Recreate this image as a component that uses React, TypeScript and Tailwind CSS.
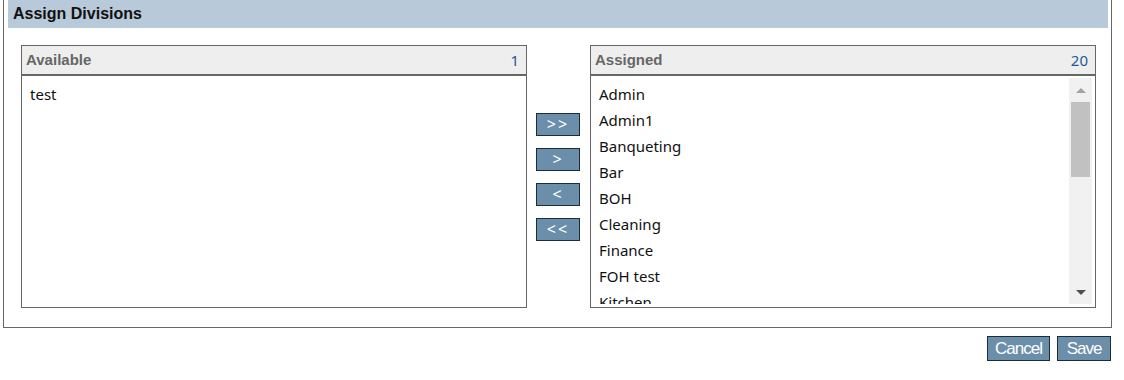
import React from 'react';

type ListPanelProps = {
  title: string;
  count: number;
  items: string[];
  scroll?: boolean;
};

const assigned = [
  'Admin',
  'Admin1',
  'Banqueting',
  'Bar',
  'BOH',
  'Cleaning',
  'Finance',
  'FOH test',
  'Kitchen',
  'Maintenance',
];

function ListPanel({ title, count, items, scroll }: ListPanelProps) {
  return (
    <div className="flex h-[263px] w-[506px] flex-col border border-[#666666] bg-white">
      <div className="flex h-[30px] items-center justify-between border-b-2 border-[#666666] bg-[#eeeeee] pl-[4px] pr-[7px]">
        <span className="font-['Liberation_Sans',Arial,sans-serif] text-[15px] font-bold text-[#666666]">
          {title}
        </span>
        <span className="font-['Noto_Sans',sans-serif] text-[15px] text-[#1f5a99]">{count}</span>
      </div>
      <div className="flex min-h-0 flex-1 pt-[2px] pr-[3px] pb-[3px]">
        <div className="min-h-0 flex-1 overflow-hidden pt-[3px] pl-[8px]">
          {items.map((item) => (
            <div
              key={item}
              className="h-[26px] font-['Noto_Sans',sans-serif] text-[15px] leading-[26px] text-[#111111]"
            >
              {item}
            </div>
          ))}
        </div>
        {scroll && (
          <div className="flex w-[23px] flex-col bg-[#f1f1f1]">
            <div className="flex h-[24px] items-center justify-center">
              <div className="h-0 w-0 border-x-[5px] border-b-[5px] border-x-transparent border-b-[#a3a3a3]" />
            </div>
            <div className="mx-[2px] h-[75px] bg-[#c1c1c1]" />
            <div className="flex-1" />
            <div className="flex h-[24px] items-center justify-center">
              <div className="h-0 w-0 border-x-[5px] border-t-[5px] border-x-transparent border-t-[#505050]" />
            </div>
          </div>
        )}
      </div>
    </div>
  );
}

function MoveButton({ label }: { label: string }) {
  return (
    <button
      type="button"
      className="h-[23px] w-[44px] border border-[#1d2c3a] bg-[#6b8eaa] font-['Noto_Sans',sans-serif] text-[16px] leading-none tracking-[2px] text-white"
    >
      {label}
    </button>
  );
}

export default function App() {
  return (
    <div className="w-[1124px] bg-white">
      <div className="ml-[3px] w-[1109px] border-x border-b border-[#666666] pr-[3px] pl-[4px]">
        <div className="flex h-[28px] items-center bg-[#b8c9d9] pl-[5px]">
          <span className="font-['Liberation_Sans',Arial,sans-serif] text-[16px] font-bold text-[#111111]">
            Assign Divisions
          </span>
        </div>
        <div className="flex items-center pt-[17px] pb-[19px] pl-[13px]">
          <ListPanel title="Available" count={1} items={['test']} />
          <div className="flex w-[63px] flex-col gap-[12px] pl-[9px]">
            <MoveButton label=">>" />
            <MoveButton label=">" />
            <MoveButton label="<" />
            <MoveButton label="<<" />
          </div>
          <ListPanel title="Assigned" count={20} items={assigned} scroll />
        </div>
      </div>
      <div className="flex justify-end gap-[7px] pt-[8px] pr-[13px]">
        <button
          type="button"
          className="h-[25px] w-[63px] border border-[#1d2c3a] bg-[#6b8eaa] font-['Liberation_Sans_Narrow','Liberation_Sans',Arial,sans-serif] text-[17px] leading-none tracking-[-1px] text-white"
        >
          Cancel
        </button>
        <button
          type="button"
          className="h-[25px] w-[54px] border border-[#1d2c3a] bg-[#6b8eaa] font-['Liberation_Sans_Narrow','Liberation_Sans',Arial,sans-serif] text-[17px] leading-none tracking-[-1px] text-white"
        >
          Save
        </button>
      </div>
    </div>
  );
}
